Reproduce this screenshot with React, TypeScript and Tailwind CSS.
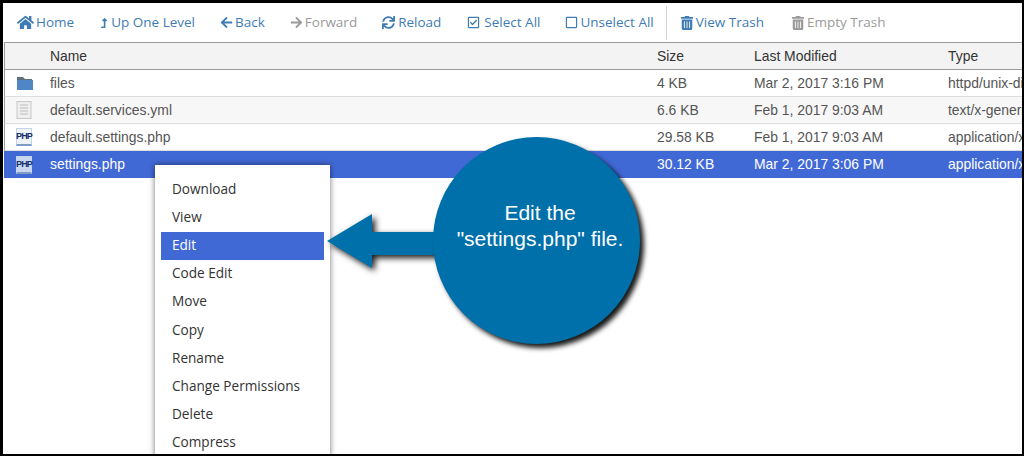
import React from 'react';
import { FaHome, FaLevelUpAlt, FaArrowLeft, FaArrowRight, FaSync, FaRegCheckSquare, FaRegSquare, FaTrashAlt } from 'react-icons/fa';

const tools = [
  { label: 'Home', icon: FaHome, size: 'text-[17px]', off: false, cls: 'ml-[14px] gap-[2px]' },
  { label: 'Up One Level', icon: FaLevelUpAlt, size: 'text-[10px]', off: false, cls: 'ml-[25px] gap-[2px]' },
  { label: 'Back', icon: FaArrowLeft, size: 'text-[13px]', off: false, cls: 'ml-[25px] gap-[2px]' },
  { label: 'Forward', icon: FaArrowRight, size: 'text-[13px]', off: true, cls: 'ml-[25px] gap-[2px]' },
  { label: 'Reload', icon: FaSync, size: 'text-[13px]', off: false, cls: 'ml-[25px] gap-[3px]' },
  { label: 'Select All', icon: FaRegCheckSquare, size: 'text-[13px]', off: false, cls: 'ml-[26px] gap-[4px]' },
  { label: 'Unselect All', icon: FaRegSquare, size: 'text-[13px]', off: false, cls: 'ml-[25px] gap-[2px]' },
];

const rows = [
  { name: 'files', size: '4 KB', date: 'Mar 2, 2017 3:16 PM', type: 'httpd/unix-directory', kind: 'folder', bg: 'bg-white' },
  { name: 'default.services.yml', size: '6.6 KB', date: 'Feb 1, 2017 9:03 AM', type: 'text/x-generic', kind: 'file', bg: 'bg-[#f7f7f7]' },
  { name: 'default.settings.php', size: '29.58 KB', date: 'Feb 1, 2017 9:03 AM', type: 'application/x-httpd-php', kind: 'php', bg: 'bg-white' },
  { name: 'settings.php', size: '30.12 KB', date: 'Mar 2, 2017 3:06 PM', type: 'application/x-httpd-php', kind: 'php', bg: 'bg-[#4169d6]' },
];

const menu = ['Download', 'View', 'Edit', 'Code Edit', 'Move', 'Copy', 'Rename', 'Change Permissions', 'Delete', 'Compress'];

function RowIcon({ kind, selected }: { kind: string; selected: boolean }) {
  if (kind === 'folder') {
    return (
      <svg width="18" height="16" viewBox="0 0 18 16">
        <path d="M1 2h6l2 2h7v3H1z" fill="#5f6f80" />
        <path d="M1 5h16v10H1z" fill="#4f86c6" />
      </svg>
    );
  }
  if (kind === 'file') {
    return (
      <svg width="16" height="18" viewBox="0 0 16 18">
        <rect x="1" y="0.5" width="14" height="17" fill="#eeeeee" stroke="#c8c8c8" />
        <path d="M4 4h8M4 7h8M4 10h8M4 13h8" stroke="#bdbdbd" />
      </svg>
    );
  }
  return (
    <span className={`flex h-[18px] w-[16px] items-center justify-center border-x border-t border-b-2 border-x-[#c5d3e6] border-t-[#c5d3e6] border-b-[#7f9cc4] ${selected ? 'bg-[#c9d6f2]' : 'bg-[#eef3fa]'}`}>
      <span className="text-[9px] leading-none font-bold tracking-[-0.8px] text-[#12306e]">PHP</span>
    </span>
  );
}

export default function App() {
  return (
    <div className="h-[456px] w-[1024px] overflow-hidden bg-black pt-[3px] pr-[2px] pb-[2px] pl-[3px]">
      <div className="relative h-full w-full overflow-hidden bg-white">
        {/* toolbar */}
        <div className="flex h-[39px] items-center font-['Open_Sans',sans-serif] text-[13.5px]">
          {tools.map((t) => (
            <span key={t.label} className={`flex items-center ${t.cls} ${t.off ? 'text-[#9a9a9a]' : 'text-[#3f7cb3]'}`}>
              <t.icon className={t.size} />
              {t.label}
            </span>
          ))}
          <span className="ml-[12px] h-[34px] w-px bg-[#d5d5d5]" />
          <span className="ml-[13px] flex items-center gap-[2px] text-[#3f7cb3]">
            <FaTrashAlt className="text-[14px]" />
            View Trash
          </span>
          <span className="ml-[27px] flex items-center gap-[2px] text-[#9a9a9a]">
            <FaTrashAlt className="text-[14px]" />
            Empty Trash
          </span>
        </div>

        {/* file table */}
        <div className="ml-px overflow-hidden font-['Liberation_Sans',sans-serif] text-[13.9px]">
          <div className="flex h-[28px] items-center border-y border-l border-[#9c9c9c] bg-[#f3f3f3] text-[#333333]">
            <span className="w-[45px] shrink-0" />
            <span className="w-[607px] shrink-0">Name</span>
            <span className="w-[97px] shrink-0">Size</span>
            <span className="w-[194px] shrink-0">Last Modified</span>
            <span className="shrink-0">Type</span>
          </div>
          {rows.map((r, i) => (
            <div
              key={r.name}
              className={`flex h-[27px] items-center whitespace-nowrap ${r.bg} ${i === 3 ? 'text-white' : 'border-b border-[#dddddd] text-[#555555]'} ${i < 3 ? 'border-l border-l-[#9c9c9c]' : 'border-l border-l-[#4169d6]'}`}
            >
              <span className="flex w-[45px] shrink-0 justify-start pl-[11px]">
                <RowIcon kind={r.kind} selected={i === 3} />
              </span>
              <span className="w-[607px] shrink-0">{r.name}</span>
              <span className="w-[97px] shrink-0">{r.size}</span>
              <span className="w-[194px] shrink-0">{r.date}</span>
              <span className="shrink-0">{r.type}</span>
            </div>
          ))}
        </div>

        {/* context menu */}
        <div className="absolute top-[162px] left-[152px] w-[175px] bg-white px-[6px] pt-[11px] font-['Open_Sans',sans-serif] text-[13.6px] text-[#333333] shadow-[0_0_6px_rgba(0,0,0,0.55)]">
          {menu.map((m) => (
            <div key={m} className={`flex h-[28.15px] items-center pb-[2px] pl-[11px] ${m === 'Edit' ? 'bg-[#4169d6] text-white' : ''}`}>
              {m}
            </div>
          ))}
        </div>

        {/* callout arrow */}
        <svg className="absolute top-[208px] left-[322px] drop-shadow-[3px_3px_3px_rgba(0,0,0,0.9)]" width="116" height="60" viewBox="0 0 116 60">
          <polygon points="2,30 47,3 47,21 116,21 116,44 47,44 47,57" fill="#0070aa" />
        </svg>

        {/* callout bubble */}
        <div className="absolute top-[134px] left-[430px] flex h-[207px] w-[207px] flex-col items-center rounded-full bg-[#0070aa] pt-[63px] pl-[7px] font-['Liberation_Sans',sans-serif] text-[21px] leading-[26px] text-white shadow-[4px_4px_5px_rgba(0,0,0,0.9)]">
          <span>Edit the</span>
          <span>"settings.php" file.</span>
        </div>
      </div>
    </div>
  );
}
